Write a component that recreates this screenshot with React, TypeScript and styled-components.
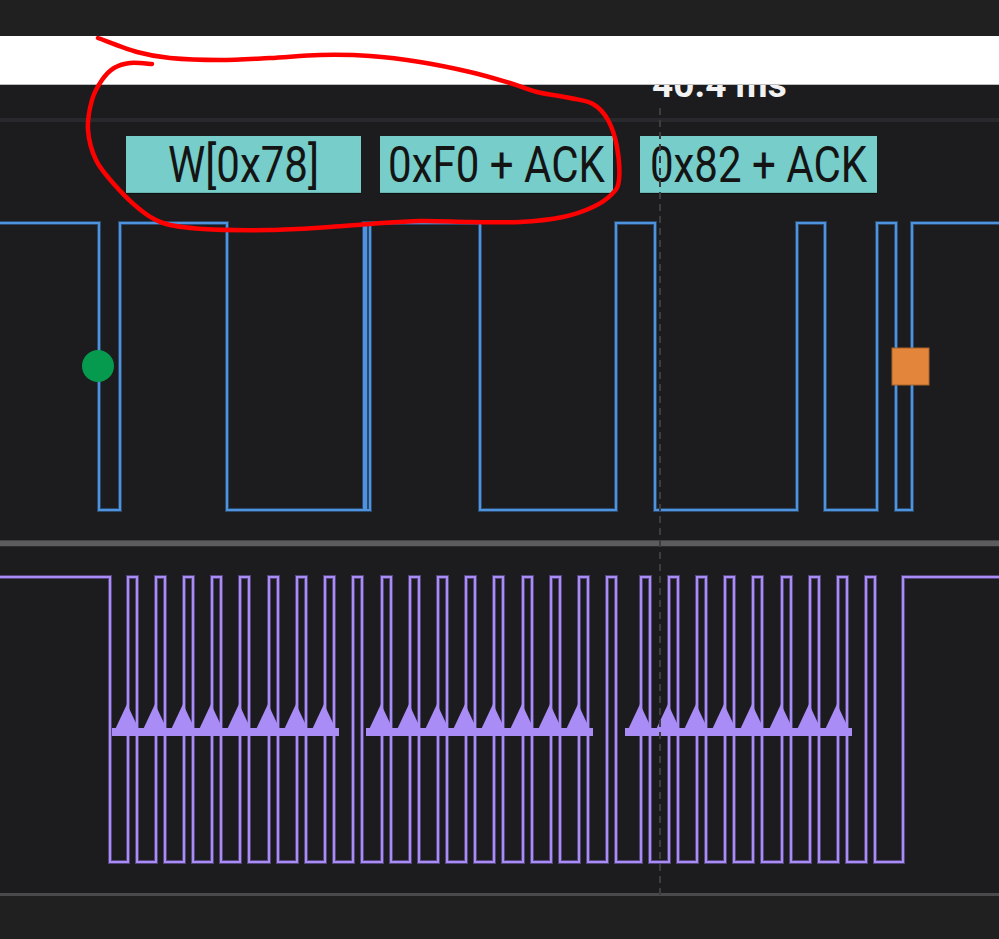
import React from "react";
import styled, { createGlobalStyle } from "styled-components";

const GlobalStyle = createGlobalStyle`
  html, body {
    margin: 0;
    padding: 0;
    background: #202020;
    overflow: hidden;
  }
  * { box-sizing: border-box; }
`;

const Page = styled.div`
  position: relative;
  width: 999px;
  height: 939px;
  display: flex;
  flex-direction: column;
  font-family: Roboto, "Liberation Sans", sans-serif;
  background: #202020;
`;

const TopBar = styled.div`
  height: 36px;
  background: #202020;
`;

const Banner = styled.div`
  height: 49px;
  background: #ffffff;
  border-bottom: 1px solid #bdbdbd;
`;

const Viewer = styled.div`
  position: relative;
  display: flex;
  flex-direction: column;
  background: #1c1c1e;
`;

const Ruler = styled.div`
  height: 33px;
  overflow: hidden;
  padding-left: 652px;
`;

const TimeLabel = styled.div`
  margin-top: -19px;
  font-size: 37px;
  line-height: 37px;
  font-weight: 700;
  color: #f2f2f2;
  white-space: nowrap;
`;

const RulerEdge = styled.div`
  height: 4px;
  background: #29292d;
`;

const Channel = styled.div<{ $height: number }>`
  height: ${(p) => p.$height}px;
  display: flex;
  flex-direction: column;
`;

const DecodeRow = styled.div`
  display: flex;
  margin-top: 14px;
  height: 57px;
`;

const DecodeBox = styled.div<{ $width: number; $left: number }>`
  width: ${(p) => p.$width}px;
  margin-left: ${(p) => p.$left}px;
  height: 57px;
  background: #76cdc9;
  box-shadow: 0 1px 0 rgba(0, 0, 0, 0.45), inset 0 -1px 0 rgba(0, 0, 0, 0.12);
  display: flex;
  align-items: center;
  justify-content: center;
`;

const BoxText = styled.span`
  display: inline-block;
  font-size: 42px;
  line-height: 1;
  color: #141414;
  transform: scaleY(1.17);
  white-space: nowrap;
  margin-top: 2px;
`;

const Wave = styled.svg<{ $height: number }>`
  display: block;
  width: 999px;
  height: ${(p) => p.$height}px;
  overflow: visible;
`;

const Separator = styled.div`
  height: 7px;
  background: #5c5c5f;
  border-top: 1px solid #444447;
  border-bottom: 1px solid #2c2c2f;
`;

const BottomRule = styled.div`
  height: 3px;
  background: #4a4a4d;
`;

const Footer = styled.div`
  flex: 1;
  background: #202020;
`;

const CursorLine = styled.div`
  position: absolute;
  left: 659px;
  top: 23px;
  bottom: -3px;
  width: 2px;
  background: repeating-linear-gradient(
    to bottom,
    #3d3d40 0px,
    #3d3d40 7px,
    transparent 7px,
    transparent 12px
  );
  pointer-events: none;
`;

const Scribble = styled.svg`
  position: absolute;
  left: 0;
  top: 0;
  width: 999px;
  height: 939px;
  pointer-events: none;
`;

const SDA = "#4d93dd";
const SDA_DIM = "#2c4a6e";
const SCL = "#aa8cf6";
const SCL_DIM = "#54467c";

const decodes = [
  { text: "W[0x78]", left: 126, width: 235 },
  { text: "0xF0 + ACK", left: 19, width: 233 },
  { text: "0x82 + ACK", left: 27, width: 237 },
];

// SDA edges, svg starts at page y 193
const sdaPath =
  "M0 30 H99 V317 H120 V30 H227 V317 H364 V30 H366 V317 H370 V30 H480 V317 H616 V30 H655 V317 H797 V30 H825 V317 H877 V30 H896 V317 H912 V30 H999";

const groups = [128, 382, 641];
const period = 28.1;
const rises: number[] = [];
groups.forEach((g) => {
  for (let i = 0; i < 9; i++) rises.push(Math.round(g + i * period));
});

const sclPath = (() => {
  let d = "M0 30 H110 V315";
  rises.forEach((x) => {
    d += ` H${x} V30 H${x + 9} V315`;
  });
  d += " H903 V30 H999";
  return d;
})();

const Edges: React.FC<{ start: number }> = ({ start }) => {
  const tips = Array.from({ length: 8 }, (_, i) => Math.round(start + i * period));
  return (
    <g fill={SCL}>
      {tips.map((x) => (
        <polygon key={x} points={`${x - 15},189 ${x},157 ${x + 15},189`} />
      ))}
      <rect x={tips[0] - 15} y={181} width={tips[7] - tips[0] + 30} height={8} />
    </g>
  );
};

// catmull-rom to bezier for the freehand mark
const smooth = (pts: number[][]) => {
  let d = `M${pts[0][0]} ${pts[0][1]}`;
  for (let i = 0; i < pts.length - 1; i++) {
    const p0 = pts[i - 1] || pts[i];
    const p1 = pts[i];
    const p2 = pts[i + 1];
    const p3 = pts[i + 2] || p2;
    const c1x = p1[0] + (p2[0] - p0[0]) / 6;
    const c1y = p1[1] + (p2[1] - p0[1]) / 6;
    const c2x = p2[0] - (p3[0] - p1[0]) / 6;
    const c2y = p2[1] - (p3[1] - p1[1]) / 6;
    d += ` C${c1x.toFixed(1)} ${c1y.toFixed(1)} ${c2x.toFixed(1)} ${c2y.toFixed(1)} ${p2[0]} ${p2[1]}`;
  }
  return d;
};

const loop = [
  [98, 38], [137, 52], [170, 58], [220, 60], [270, 58], [320, 55], [370, 56],
  [420, 62], [470, 72], [510, 83], [537, 92], [570, 98], [593, 104], [608, 120],
  [617, 147], [619, 180], [612, 194], [593, 207], [563, 217], [520, 222],
  [470, 222], [420, 221], [370, 224], [330, 227], [270, 230], [203, 229],
  [163, 223], [137, 207], [113, 183], [96, 160], [88, 130], [92, 100],
  [102, 80], [114, 68], [130, 63], [152, 64],
];

const App: React.FC = () => {
  return (
    <>
      <GlobalStyle />
      <Page>
        <TopBar />
        <Banner />
        <Viewer>
          <Ruler>
            <TimeLabel>40.4 ms</TimeLabel>
          </Ruler>
          <RulerEdge />
          <Channel $height={418}>
            <DecodeRow>
              {decodes.map((d) => (
                <DecodeBox key={d.text} $width={d.width} $left={d.left}>
                  <BoxText>{d.text}</BoxText>
                </DecodeBox>
              ))}
            </DecodeRow>
            <Wave $height={347} viewBox="0 0 999 347">
              <path d={sdaPath} fill="none" stroke={SDA_DIM} strokeWidth={4} />
              <path d={sdaPath} fill="none" stroke={SDA} strokeWidth={2} />
              <circle cx={98} cy={173} r={16} fill="#069a4e" />
              <rect x={892} y={155} width={37} height={37} fill="#e3853a" stroke="#a8622b" strokeWidth={1} />
            </Wave>
          </Channel>
          <Separator />
          <Channel $height={346}>
            <Wave $height={346} viewBox="0 0 999 346">
              <path d={sclPath} fill="none" stroke={SCL_DIM} strokeWidth={4} />
              <path d={sclPath} fill="none" stroke={SCL} strokeWidth={2} />
              {groups.map((g) => (
                <Edges key={g} start={g - 1} />
              ))}
            </Wave>
          </Channel>
          <BottomRule />
          <CursorLine />
        </Viewer>
        <Footer />
        <Scribble viewBox="0 0 999 939">
          <path d={smooth(loop)} fill="none" stroke="#ff0000" strokeWidth={4.5} strokeLinecap="round" strokeLinejoin="round" />
        </Scribble>
      </Page>
    </>
  );
};

export default App;
